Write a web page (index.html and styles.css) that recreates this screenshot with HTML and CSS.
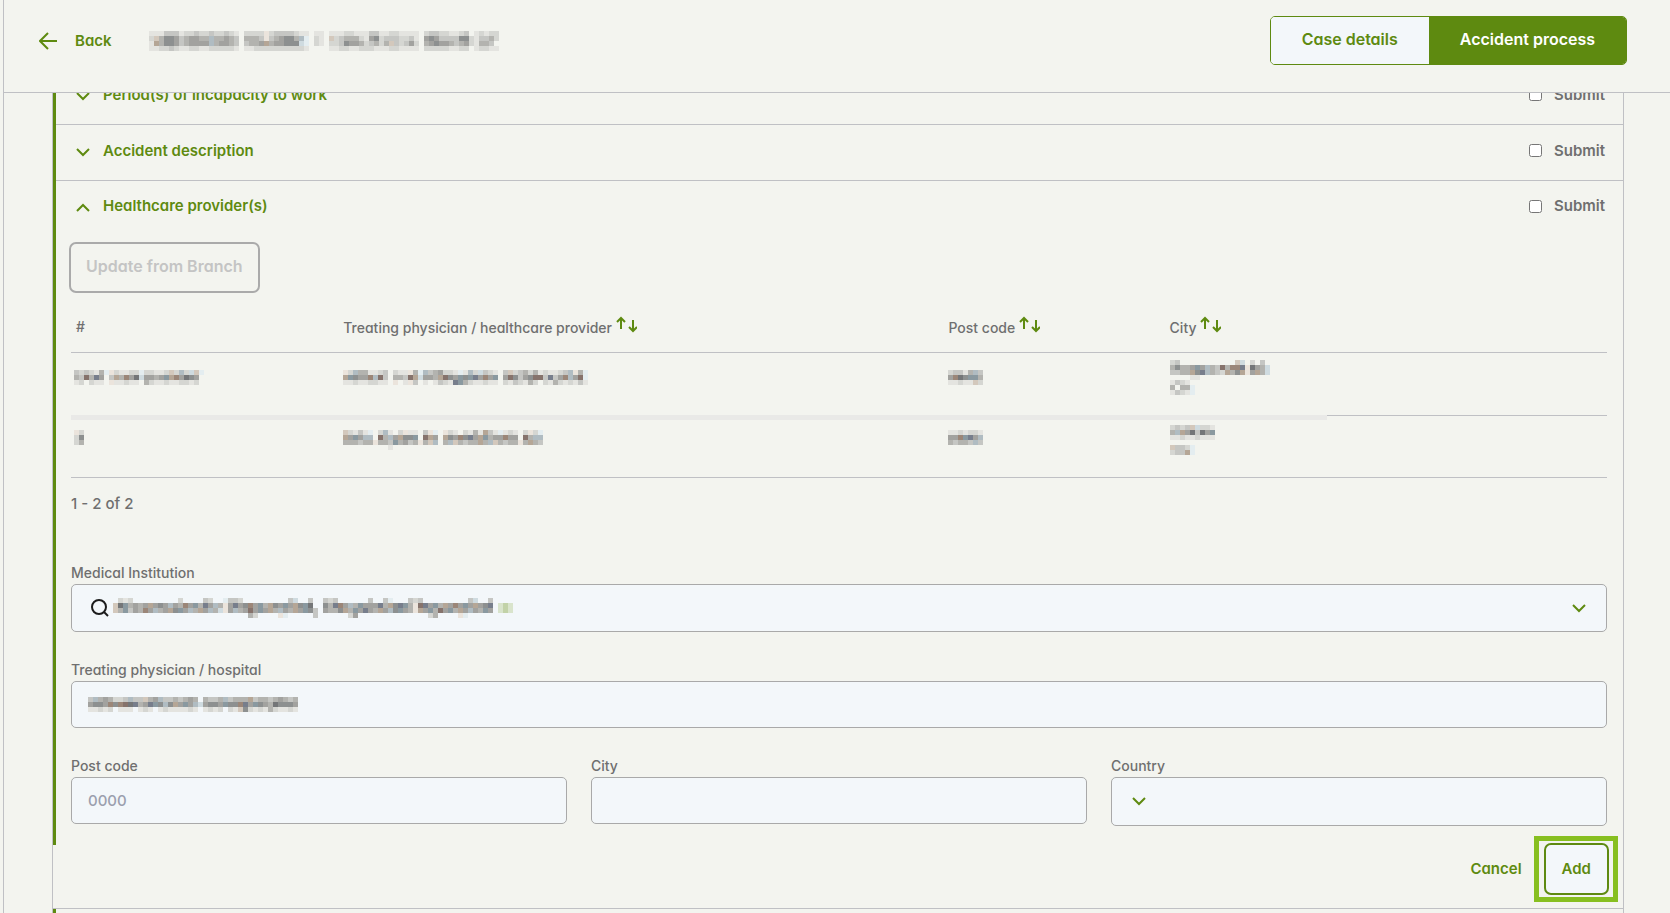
FILE: index.html
```html
<!DOCTYPE html>
<html lang="en">

<head>
    <meta charset="UTF-8">
    <meta name="viewport" content="width=device-width, initial-scale=1.0">
    <title>Accident process</title>
    <link rel="stylesheet" href="styles.css">
</head>

<body>
<div class="app">
    <!-- top bar -->
    <header class="topbar">
        <a class="back" href="#">
            <svg width="18" height="18" viewBox="0 0 18 18"><path d="M18 9H1M9 1L1 9l8 8"/></svg>
            Back
        </a>
        <span class="mosaic" data-name="case"></span>
        <nav class="switch">
            <button type="button">Case details</button>
            <button type="button" class="active">Accident process</button>
        </nav>
    </header>

    <main class="scroll-area">
        <div class="panel">
            <section class="section">
                <div class="section-head">
                    <button type="button" class="toggle">
                        <svg class="chevron" width="14" height="9" viewBox="0 0 14 9"><path d="M1 1l6 6 6-6"/></svg>
                        Period(s) of incapacity to work
                    </button>
                    <label class="submit"><input type="checkbox"> Submit</label>
                </div>
            </section>
            <section class="section">
                <div class="section-head">
                    <button type="button" class="toggle">
                        <svg class="chevron" width="14" height="9" viewBox="0 0 14 9"><path d="M1 1l6 6 6-6"/></svg>
                        Accident description
                    </button>
                    <label class="submit"><input type="checkbox"> Submit</label>
                </div>
            </section>

            <!-- healthcare providers, opened -->
            <section class="section open">
                <div class="section-head">
                    <button type="button" class="toggle">
                        <svg class="chevron" width="14" height="9" viewBox="0 0 14 9"><path d="M1 8l6-6 6 6"/></svg>
                        Healthcare provider(s)
                    </button>
                    <label class="submit"><input type="checkbox"> Submit</label>
                </div>
                <div class="section-body">
                    <button type="button" class="btn btn-update" disabled>Update from Branch</button>

                    <table class="providers">
                        <colgroup>
                            <col class="col-no"><col class="col-name"><col class="col-post"><col class="col-city"><col>
                        </colgroup>
                        <thead>
                            <tr>
                                <th>#</th>
                                <th>Treating physician / healthcare provider <svg class="sort" width="21" height="17" viewBox="0 0 21 17"><path d="M5 13V2M1 6l4-4 4 4M17 4v11M13 11l4 4 4-4"/></svg></th>
                                <th>Post code <svg class="sort" width="21" height="17" viewBox="0 0 21 17"><path d="M5 13V2M1 6l4-4 4 4M17 4v11M13 11l4 4 4-4"/></svg></th>
                                <th>City <svg class="sort" width="21" height="17" viewBox="0 0 21 17"><path d="M5 13V2M1 6l4-4 4 4M17 4v11M13 11l4 4 4-4"/></svg></th>
                                <th></th>
                            </tr>
                        </thead>
                        <tbody>
                            <tr>
                                <td><span class="mosaic" data-name="no1"></span></td>
                                <td><span class="mosaic" data-name="name1"></span></td>
                                <td><span class="mosaic" data-name="post1"></span></td>
                                <td class="city"><span class="mosaic" data-name="city1"></span></td>
                                <td></td>
                            </tr>
                            <tr>
                                <td><span class="mosaic" data-name="no2"></span></td>
                                <td><span class="mosaic" data-name="name2"></span></td>
                                <td><span class="mosaic" data-name="post2"></span></td>
                                <td class="city"><span class="mosaic" data-name="city2"></span></td>
                                <td></td>
                            </tr>
                        </tbody>
                    </table>
                    <p class="count">1 - 2 of 2</p>

                    <div class="field">
                        <label for="institution">Medical Institution</label>
                        <div class="box box-search">
                            <svg class="search" width="18" height="18" viewBox="0 0 18 18"><circle cx="8" cy="8" r="7"/><path d="M13 13l4 4"/></svg>
                            <span class="mosaic" data-name="institution"></span>
                            <input type="text" id="institution">
                            <svg class="chevron" width="14" height="9" viewBox="0 0 14 9"><path d="M1 1l6 6 6-6"/></svg>
                        </div>
                    </div>
                    <div class="field">
                        <label for="physician">Treating physician / hospital</label>
                        <div class="box">
                            <span class="mosaic" data-name="physician"></span>
                            <input type="text" id="physician">
                        </div>
                    </div>
                    <div class="field-row">
                        <div class="field">
                            <label for="postcode">Post code</label>
                            <div class="box"><input type="text" id="postcode" placeholder="0000"></div>
                        </div>
                        <div class="field">
                            <label for="city">City</label>
                            <div class="box"><input type="text" id="city"></div>
                        </div>
                        <div class="field">
                            <label for="country">Country</label>
                            <div class="box box-select">
                                <svg class="chevron" width="14" height="9" viewBox="0 0 14 9"><path d="M1 1l6 6 6-6"/></svg>
                                <select id="country"><option></option></select>
                            </div>
                        </div>
                    </div>
                </div>
            </section>

            <div class="actions">
                <button type="button" class="btn-cancel">Cancel</button>
                <span class="highlight"><button type="button" class="btn btn-add">Add</button></span>
            </div>

            <section class="section">
                <div class="section-head"></div>
            </section>
        </div>
    </main>
</div>
<script src="script.js"></script>
</body>
</html>
```
FILE: styles.css
```css
* {
    box-sizing: border-box;
}

body {
    margin: 0;
    overflow: hidden;
    background: #f3f4ef;
    color: #6f6f6f;
    font-family: Inter, "Liberation Sans", sans-serif;
    font-feature-settings: "cv11";
    font-size: 15px;
    font-weight: 500;
    line-height: 20px;
}

button, input, select {
    font: inherit;
    font-feature-settings: inherit;
    color: inherit;
}

button {
    cursor: pointer;
}

svg {
    display: block;
    flex: none;
    fill: none;
    stroke: #5e8a10;
    stroke-width: 2;
}

.app {
    height: 100vh;
    margin-left: 3px;
    border-left: 1px solid #bfc0c4;
    display: flex;
    flex-direction: column;
}

/* top bar */
.topbar {
    display: flex;
    flex: none;
    align-items: center;
    height: 93px;
    padding: 0 43px 11px 35px;
    border-bottom: 1px solid #bfc0c4;
}

.back {
    display: flex;
    align-items: center;
    gap: 18px;
    width: 110px;
    color: #5e8a10;
    font-weight: 600;
    text-decoration: none;
}

.switch {
    display: flex;
    margin-left: auto;
    border: 1px solid #5e8a10;
    border-radius: 5px;
    overflow: hidden;
}

.switch button {
    padding: 12px 31px 15px;
    border: 0;
    background: #f3f7fa;
    color: #5e8a10;
    font-size: 16px;
    font-weight: 600;
}

.switch .active {
    background: #5e8a10;
    color: #fff;
}

/* accordion */
.scroll-area {
    flex: 1;
    overflow: hidden;
}

.panel {
    margin: -24px 46px 0 48px;
    border: solid #bfc0c4;
    border-width: 0 1px;
}

.section {
    border-left: 3px solid #5e8a10;
}

.section-head {
    display: flex;
    align-items: center;
    justify-content: space-between;
    height: 56px;
    padding: 0 18px 4px 20px;
    border-bottom: 1px solid #bfc0c4;
}

.open .section-head {
    padding-bottom: 6px;
    border-bottom: 0;
}

.toggle {
    display: flex;
    align-items: center;
    gap: 13px;
    padding: 0;
    border: 0;
    background: none;
    color: #5e8a10;
    font-weight: 600;
}

.toggle .chevron {
    margin-top: 3px;
}

.submit {
    display: flex;
    align-items: center;
    gap: 12px;
    font-weight: 600;
}

.submit input {
    margin: 0;
}

.section-body {
    padding: 5px 16px 19px 15px;
}

.btn {
    height: 52px;
    padding: 0 16px;
    border: 2px solid #5e8a10;
    border-radius: 7px;
    background: #f3f7fa;
    color: #5e8a10;
    font-weight: 600;
}

.btn-update {
    height: 51px;
    margin-left: -2px;
    padding: 0 15px 4px;
    border-color: #aaa;
    background: none;
    color: #c4c4c4;
    font-size: 16px;
}

/* providers table */
.providers {
    width: 100%;
    table-layout: fixed;
    border-spacing: 0;
}

.col-no { width: 17.4%; }
.col-name { width: 39.4%; }
.col-post { width: 14.4%; }
.col-city { width: 10.6%; }

.providers th {
    height: 60px;
    padding: 9px 5px 0;
    border-bottom: 1px solid #bfc0c4;
    font-size: 14px;
    font-weight: 500;
    text-align: left;
    white-space: nowrap;
}

.providers td {
    height: 63px;
    padding: 17px 5px 0;
    border-bottom: 1px solid #bfc0c4;
    vertical-align: top;
}

.providers td:first-child {
    padding-left: 3px;
}

.providers .city {
    padding-top: 7px;
}

.providers tbody tr:first-child td:not(:last-child) {
    border-color: #e9e9e7;
}

.providers tr + tr td {
    height: 62px;
    padding-top: 14px;
}

.providers tr + tr .city {
    padding-top: 9px;
}

.providers tr + tr td:not(:last-child) {
    box-shadow: inset 0 4px #e9e9e7;
}

.sort {
    display: inline-block;
    vertical-align: 0;
}

.count {
    margin: 16px 0 49px;
}

/* form */
.field {
    margin-bottom: 28px;
}

.field > label {
    display: block;
    margin-bottom: 1px;
    font-size: 14px;
}

.box {
    display: flex;
    align-items: center;
    height: 47px;
    padding: 0 16px;
    border: 1px solid #a9a9a9;
    border-radius: 5px;
    background: #f3f7fa;
}

.box-search {
    height: 48px;
    padding: 0 20px 0 19px;
}

.box-select {
    height: 49px;
    padding-left: 20px;
}

.box input, .box select {
    flex: 1;
    min-width: 0;
    padding: 0;
    border: 0;
    outline: 0;
    background: none;
    appearance: none;
}

.box input::placeholder {
    color: #9b9fae;
}

.search {
    margin-right: 4px;
    stroke: #1c1c1c;
}

.field-row {
    display: grid;
    grid-template-columns: repeat(3, 1fr);
    gap: 24px;
}

.field-row .field {
    margin-bottom: 0;
}

.actions {
    display: flex;
    align-items: center;
    justify-content: flex-end;
    gap: 22px;
    margin-top: -2px;
    padding: 0 14px 13px;
    border-bottom: 1px solid #bfc0c4;
}

.btn-cancel {
    padding: 0;
    border: 0;
    background: none;
    color: #5e8a10;
    font-weight: 600;
}

/* frame around the add button */
.highlight {
    position: relative;
}

.highlight::after {
    content: "";
    position: absolute;
    inset: -7px -9px -7px -10px;
    border: 5px solid #87bf20;
    pointer-events: none;
}

.highlight .btn {
    display: block;
}

.mosaic svg {
    stroke: none;
}
```
FILE: script.js
```js
// pixelated private data: one character per 5px cell
const colors = {
    1: '#e4e4e0', 2: '#d5d6d2', 3: '#c5c6c3', 4: '#b3b3af', 5: '#a2a29f', 6: '#8d9090', 7: '#747678',
    t: '#ebe4dc', u: '#d3c8bc', v: '#b5a696', w: '#9b8678', x: '#86736c',
    p: '#e4edf0', q: '#cfdbe0', r: '#b0bcc2', s: '#8a99a0', y: '#777e8c',
    G: '#d9e4cc', H: '#c2d2a8'
};

const mosaics = {
    case: [
        '111333122322322321.2222t23333211.11.111221113311221111.233221123.12122',
        '2u4665345544r44543.4443t345664rp.21.u23444215623332231.565333366213342',
        '1v4665345555r45543.3445v455666qp.21.223655423424u32352.45655434521443.',
        '112232112211222221.1122222222221....112211222111221111.222221122.12211'
    ],
    no1: [
        '323214pt21122p22112u2r2qup',
        '43x4y5.3v4w57q5545svw5765.',
        '12.211.t11211.42112112212.'
    ],
    name1: [
        't2r441123.211t4pr345221p1r2q321.3u23424121123rt4p',
        'vs655wrx3.443xvq554vx65s6sy5w5s.5x6356xx3y35wr5xp',
        '112112211.t.1t3.1.1321ys4211211.2132142.214212131'
    ],
    post1: ['23314r3', '5w76ss4', '11211u2'],
    city1: [
        '23...........uq.2.3.',
        '46445s5r43x4wwyt754q',
        '3344v6yr432v46vt5v4q',
        '....11',
        '1321',
        '4.44p',
        '1321p'
    ],
    no2: ['t2', '26', '24'],
    name2: [
        'u2131p.2r1.2t11.3tp.t21.2141v31p121.2t2p',
        'v5s5rr.x4r5v66s.xv5.v65w6y5vs455w55.x4rr',
        '444344t443s4534t4ur.4ru4344v4ru4344t4v43',
        '.........1'
    ],
    post2: ['1121221', '55wsy5r', '43443r3'],
    city2: ['2323uq221', '4rv57375s', '112112111', '', 'u332p', '233vp'],
    institution: [
        '.212.........2....32..p332.........3q..3..323......3..3p...323.........3q..3',
        'u7s4545v565r54w5s4y5r4t5y56w5s4v65s5v6s7..64yw5r4s555y4v6ys4txy5s4v5w5s5v56y.GHG',
        'u4s354w5r45v6s5r4v5r4qt5r45x5s5v4r54v5s63.5446v4s5y54v5r6s54tv5s4x5s4v5r54s5.GHG',
        '...........................42....tp.....3......25..............24....tp'
    ],
    physician: [
        '3r454223r33u45r3343454.4334r3444v344345434',
        '5665w6wx7y45ys6r6v5s5rq5665s66wy5s65476665',
        '11212.111.121.12111121.1212.21u62121421121'
    ]
};

document.querySelectorAll('.mosaic').forEach(el => {
    const rows = mosaics[el.dataset.name];
    const cols = Math.max(...rows.map(row => row.length));
    let rects = '';
    rows.forEach((row, y) => {
        [...row].forEach((c, x) => {
            if (colors[c]) {
                rects += `<rect x="${x * 5}" y="${y * 5}" width="5" height="5" fill="${colors[c]}"/>`;
            }
        });
    });
    el.innerHTML = `<svg width="${cols * 5}" height="${rows.length * 5}" shape-rendering="crispEdges" aria-hidden="true">${rects}</svg>`;
});
```
